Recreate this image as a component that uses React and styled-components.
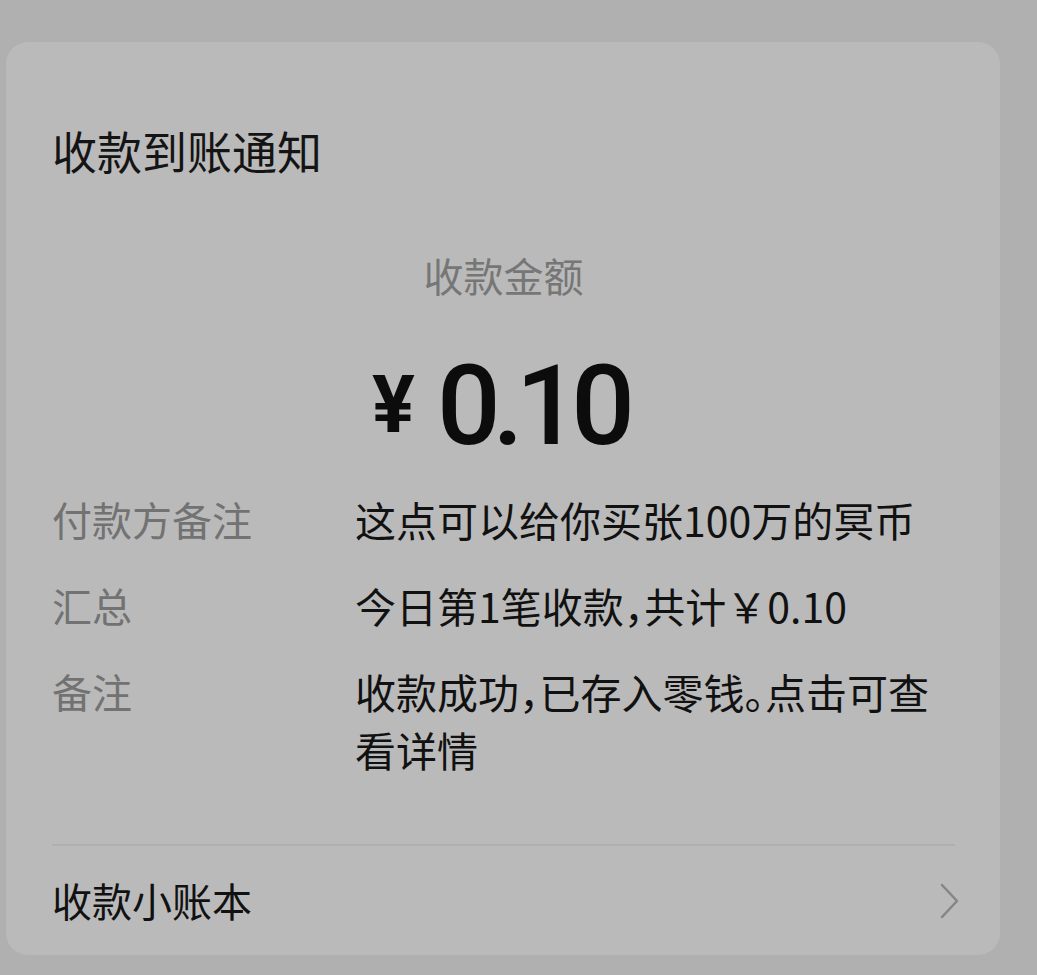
import React from "react";
import styled, { createGlobalStyle } from "styled-components";

const GlobalStyle = createGlobalStyle`
  html, body {
    margin: 0;
    padding: 0;
    background: #b0b0b0;
  }
  body {
    font-family: "Noto Sans CJK SC", "Noto Sans", sans-serif;
    color: #111;
  }
`;

const Page = styled.div`
  width: 1037px;
  height: 975px;
  padding: 42px 0 0 6px;
  box-sizing: border-box;
  overflow: hidden;
`;

const Card = styled.div`
  width: 994px;
  height: 913px;
  box-sizing: border-box;
  background: #bababa;
  border-radius: 22px;
  padding: 78px 45px 0 46px;
  display: flex;
  flex-direction: column;
`;

const Title = styled.h1`
  margin: 0;
  font-size: 45px;
  line-height: 62px;
  font-weight: 400;
  color: #141414;
`;

const AmountLabel = styled.div`
  margin-top: 65px;
  text-align: center;
  font-size: 40px;
  line-height: 56px;
  color: #767676;
`;

const Amount = styled.div`
  margin-top: 47px;
  display: flex;
  justify-content: center;
  align-items: flex-start;
  gap: 22px;
  color: #0c0c0c;
  font-family: "Roboto", "Noto Sans", sans-serif;
  font-weight: 700;
  padding-right: 8px;
`;

const Yen = styled.span`
  font-size: 80px;
  line-height: 80px;
  margin-top: 15px;
`;

const Digits = styled.span`
  font-size: 112px;
  line-height: 112px;
  letter-spacing: -8px;
  font-weight: 500;
`;

const Rows = styled.div`
  margin-top: 28px;
  display: grid;
  grid-template-columns: 303px 1fr;
  row-gap: 28px;
`;

const Label = styled.div`
  font-size: 40px;
  line-height: 58px;
  color: #727272;
`;

const Value = styled.div`
  font-size: 41px;
  line-height: 58px;
  color: #111;
  font-feature-settings: "halt";
`;

const Divider = styled.div`
  margin-top: 66px;
  height: 2px;
  background: #b0b0b0;
`;

const Footer = styled.div`
  display: flex;
  align-items: center;
  justify-content: space-between;
  padding-top: 26px;
`;

const FooterText = styled.span`
  font-size: 40px;
  line-height: 56px;
  color: #111;
`;

const ChevronBox = styled.svg`
  margin-right: -6px;
  margin-top: 2px;
`;

const Chevron = () => (
  <ChevronBox width="22" height="38" viewBox="0 0 22 38" fill="none">
    <polyline
      points="3,3 18,19 3,35"
      stroke="#858585"
      strokeWidth="2.5"
      strokeLinecap="round"
      strokeLinejoin="round"
    />
  </ChevronBox>
);

const rows = [
  ["付款方备注", "这点可以给你买张100万的冥币"],
  ["汇总", "今日第1笔收款，共计￥0.10"],
  ["备注", "收款成功，已存入零钱。点击可查看详情"],
];

export default function App() {
  return (
    <Page>
      <GlobalStyle />
      <Card>
        <Title>收款到账通知</Title>
        <AmountLabel>收款金额</AmountLabel>
        <Amount>
          <Yen>¥</Yen>
          <Digits>0.10</Digits>
        </Amount>
        <Rows>
          {rows.map(([k, v]) => (
            <React.Fragment key={k}>
              <Label>{k}</Label>
              <Value>{v}</Value>
            </React.Fragment>
          ))}
        </Rows>
        <Divider />
        <Footer>
          <FooterText>收款小账本</FooterText>
          <Chevron />
        </Footer>
      </Card>
    </Page>
  );
}
